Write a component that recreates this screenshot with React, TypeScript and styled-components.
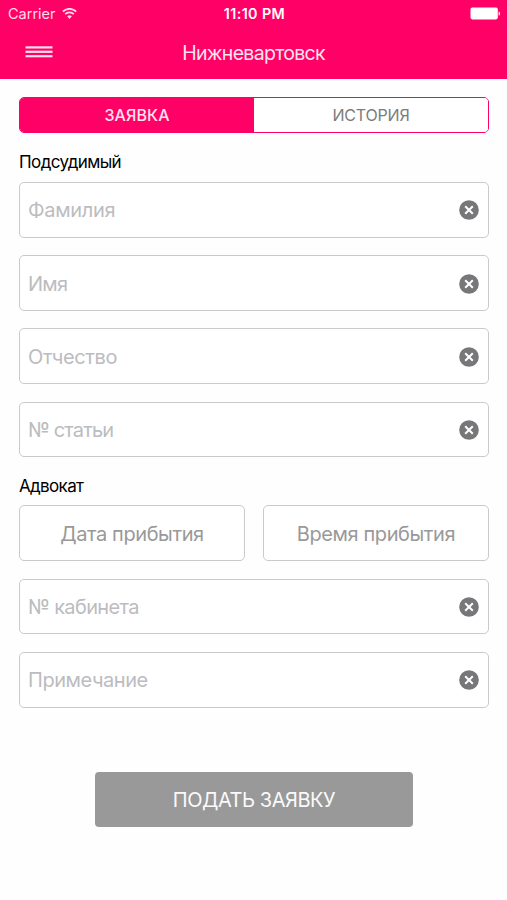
import React from "react";
import styled, { createGlobalStyle } from "styled-components";

const PINK = "#ff0066";

const GlobalStyle = createGlobalStyle`
  *, *::before, *::after { box-sizing: border-box; }
  body { margin: 0; background: #fff; }
  button { font: inherit; margin: 0; padding: 0; cursor: pointer; }
`;

const Screen = styled.div`
  display: flex;
  flex-direction: column;
  width: 507px;
  height: 900px;
  background: #fefefe;
  color: #000;
  font-family: Inter, "Noto Sans", sans-serif;
  overflow: hidden;
`;

const Header = styled.header`
  display: flex;
  flex-direction: column;
  height: 79.3px;
  background: ${PINK};
  color: #fff;
`;

const StatusBar = styled.div`
  display: grid;
  grid-template-columns: 1fr auto 1fr;
  align-items: center;
  height: 27px;
  padding: 0 6px 0 8px;
  font-size: 14px;
`;

const Carrier = styled.div`
  display: flex;
  align-items: center;
  gap: 6px;
  opacity: 0.85;
`;

const Battery = styled.div`
  display: flex;
  justify-content: flex-end;
`;

const NavBar = styled.div`
  display: grid;
  grid-template-columns: 1fr auto 1fr;
  align-items: center;
  height: 52px;
  padding: 0 25px;
`;

const MenuButton = styled.button`
  display: flex;
  width: 28px;
  height: 12px;
  margin-bottom: 3px;
  border: 0;
  background: none;
`;

const Fit = styled.span<{ $size: number; $spacing?: number; $weight?: number; $color?: string; $drop?: number }>`
  font-size: ${(p) => p.$size}px;
  letter-spacing: ${(p) => p.$spacing ?? 0}px;
  font-weight: ${(p) => p.$weight ?? 400};
  color: ${(p) => p.$color ?? "inherit"};
  padding-top: ${(p) => p.$drop ?? 0}px;
  white-space: nowrap;
`;

const Form = styled.main`
  display: flex;
  flex-direction: column;
  padding: 18px 18px 0 19px;
`;

const Segments = styled.div`
  display: grid;
  grid-template-columns: 1fr 1fr;
  height: 36px;
  border: 1px solid ${PINK};
  border-radius: 5px;
  overflow: hidden;
`;

const Segment = styled.button<{ $active?: boolean }>`
  display: flex;
  align-items: center;
  justify-content: center;
  border: 0;
  background: ${(p) => (p.$active ? PINK : "#fff")};
  color: ${(p) => (p.$active ? "#ffe3ee" : "#7c7c7c")};
`;

const SectionTitle = styled.h2<{ $height: number }>`
  display: flex;
  align-items: center;
  height: ${(p) => p.$height}px;
  margin: 0;
  line-height: 20px;
`;

const Stack = styled.div`
  display: flex;
  flex-direction: column;
  gap: 17.6px;
`;

const Pair = styled.div`
  display: grid;
  grid-template-columns: 1fr 1fr;
  gap: 18px;
`;

const Field = styled.div`
  display: flex;
  align-items: center;
  justify-content: space-between;
  height: 55.7px;
  padding: 1px 9px 0 8px;
  border: 1px solid #cacacb;
  border-radius: 5px;
  background: #fff;
`;

const PickerButton = styled.button`
  display: flex;
  align-items: center;
  justify-content: center;
  height: 55.7px;
  padding-top: 1px;
  border: 1px solid #cacacb;
  border-radius: 5px;
  background: #fff;
`;

const ClearButton = styled.button`
  display: flex;
  border: 0;
  background: none;
`;

const Submit = styled.button`
  display: flex;
  align-items: center;
  justify-content: center;
  align-self: center;
  width: 318px;
  height: 55px;
  margin-top: 64.4px;
  padding-top: 1px;
  border: 0;
  border-radius: 4px;
  background: #999;
  color: #fafafa;
`;

const WifiIcon = () => (
  <svg width="15" height="12" viewBox="0 0.9 15 12" fill="none" stroke="#fff" strokeWidth="1.8">
    <path d="M0.8 4.5a9.5 9.5 0 0 1 13.4 0" />
    <path d="M3.2 7a6.1 6.1 0 0 1 8.6 0" />
    <path d="M7.5 11.9 5.2 9.2a3.3 3.3 0 0 1 4.6 0z" fill="#fff" stroke="none" />
  </svg>
);

const BatteryIcon = () => (
  <svg width="31" height="13" viewBox="0 0 31 13" fill="#fff">
    <rect x="0.5" y="0.6" width="27.3" height="11.8" rx="1.8" />
    <path d="M28.6 4.4c1.9.5 1.9 3.7 0 4.2z" />
  </svg>
);

const MenuIcon = () => (
  <svg width="28" height="12" viewBox="0 0 28 12" fill="#ffe0ec">
    <rect x="0.5" y="0.3" width="27" height="2.2" />
    <rect x="0.5" y="4.7" width="27" height="2.2" />
    <rect x="0.5" y="9.1" width="27" height="2.2" />
  </svg>
);

const ClearIcon = () => (
  <svg width="20" height="20" viewBox="0 0 20 20">
    <circle cx="10" cy="10" r="9.8" fill="#77777a" />
    <path d="M6.2 6.2l7.6 7.6M13.8 6.2l-7.6 7.6" stroke="#fff" strokeWidth="2" />
  </svg>
);

type FieldData = { label: string; spacing: number };

const DEFENDANT: FieldData[] = [
  { label: "Фамилия", spacing: -0.3 },
  { label: "Имя", spacing: -0.7 },
  { label: "Отчество", spacing: -0.4 },
  { label: "№ статьи", spacing: -0.85 },
];

const LAWYER: FieldData[] = [
  { label: "№ кабинета", spacing: -0.65 },
  { label: "Примечание", spacing: -0.45 },
];

const ClearableField = ({ label, spacing }: FieldData) => (
  <Field>
    <Fit $size={20} $spacing={spacing} $color="#bcbcc0">{label}</Fit>
    <ClearButton aria-label="Очистить"><ClearIcon /></ClearButton>
  </Field>
);

export default function App() {
  return (
    <>
      <GlobalStyle />
      <Screen>
        <Header>
          <StatusBar>
            <Carrier>
              <Fit $size={14.5}>Carrier</Fit>
              <WifiIcon />
            </Carrier>
            <Fit $size={14.3} $weight={600} $spacing={0.4}>11:10 PM</Fit>
            <Battery><BatteryIcon /></Battery>
          </StatusBar>
          <NavBar>
            <MenuButton aria-label="Меню"><MenuIcon /></MenuButton>
            <Fit $size={19.5} $spacing={-0.7} $color="#ffe3ee">Нижневартовск</Fit>
          </NavBar>
        </Header>
        <Form>
          <Segments>
            <Segment $active><Fit $size={16} $weight={500} $spacing={0.1}>ЗАЯВКА</Fit></Segment>
            <Segment><Fit $size={16} $spacing={-0.2}>ИСТОРИЯ</Fit></Segment>
          </Segments>
          <SectionTitle $height={48.6}><Fit $size={17} $spacing={-0.6} $drop={9}>Подсудимый</Fit></SectionTitle>
          <Stack>
            {DEFENDANT.map((f) => <ClearableField key={f.label} {...f} />)}
          </Stack>
          <SectionTitle $height={48}><Fit $size={17} $spacing={-0.65} $drop={9}>Адвокат</Fit></SectionTitle>
          <Stack>
            <Pair>
              <PickerButton><Fit $size={20} $spacing={-0.4} $color="#999">Дата прибытия</Fit></PickerButton>
              <PickerButton><Fit $size={20} $spacing={-0.4} $color="#999">Время прибытия</Fit></PickerButton>
            </Pair>
            {LAWYER.map((f) => <ClearableField key={f.label} {...f} />)}
          </Stack>
          <Submit><Fit $size={20} $spacing={-0.45}>ПОДАТЬ ЗАЯВКУ</Fit></Submit>
        </Form>
      </Screen>
    </>
  );
}
